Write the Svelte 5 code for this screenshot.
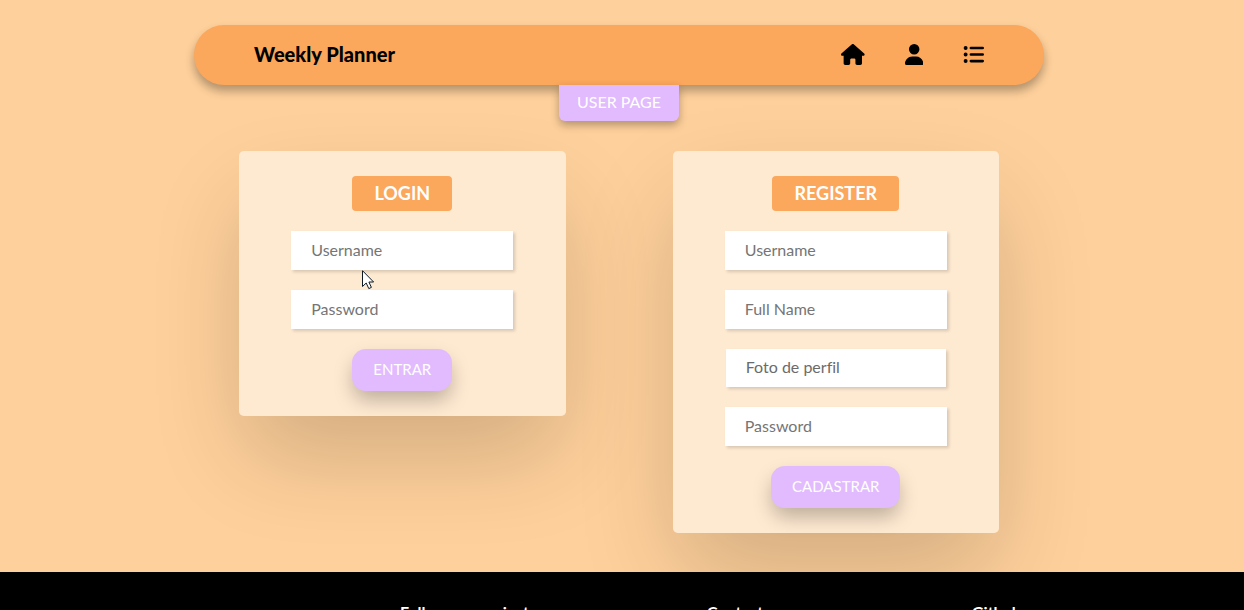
<script>
  const icons = [
    {
      name: 'Home',
      box: '0 0 576 512',
      path: 'M575.8 255.5c0 18-15 32.1-32 32.1h-32l.7 160.2c0 2.7-.2 5.4-.5 8.1V472c0 22.1-17.9 40-40 40H392c-22.1 0-40-17.9-40-40V384c0-17.7-14.3-32-32-32H256c-17.7 0-32 14.3-32 32v88c0 22.1-17.9 40-40 40H104c-22.1 0-40-17.9-40-40V287.6H32c-18 0-32-14-32-32.1c0-9 3-17 10-24L266.4 8c7-7 15-8 22-8s15 2 21 7L564.8 231.5c8 7 12 15 11 24z',
    },
    {
      name: 'User',
      box: '0 0 448 512',
      path: 'M224 256A128 128 0 1 0 224 0a128 128 0 1 0 0 256zm-45.7 48C79.8 304 0 383.8 0 482.3C0 498.7 13.3 512 29.7 512H418.3c16.4 0 29.7-13.3 29.7-29.7C448 383.8 368.2 304 269.7 304H178.3z',
    },
    {
      name: 'Tasks',
      box: '0 0 512 512',
      path: 'M64 144a48 48 0 1 0 0-96 48 48 0 1 0 0 96zM192 64a32 32 0 0 0 0 64H480a32 32 0 0 0 0-64H192zm0 160a32 32 0 0 0 0 64H480a32 32 0 0 0 0-64H192zm0 160a32 32 0 0 0 0 64H480a32 32 0 0 0 0-64H192zM64 304a48 48 0 1 0 0-96 48 48 0 1 0 0 96zm48 112a48 48 0 1 0-96 0 48 48 0 1 0 96 0z',
    },
  ];
</script>

<div class="page">
  <header>
    <div class="bar">
      <h1>Weekly Planner</h1>
      <nav>
        {#each icons as icon}
          <a href="#{icon.name.toLowerCase()}" aria-label={icon.name}>
            <svg viewBox={icon.box} aria-hidden="true"><path d={icon.path} /></svg>
          </a>
        {/each}
      </nav>
    </div>
    <p class="tab">USER PAGE</p>
  </header>

  <main>
    <form class="card">
      <h2>LOGIN</h2>
      <input class="field" type="text" placeholder="Username" aria-label="Username" />
      <input class="field" type="password" placeholder="Password" aria-label="Password" />
      <button type="button">ENTRAR</button>
      <svg class="pointer" viewBox="0 0 12 20" aria-hidden="true">
        <path d="M.5 .7V16.5L4.2 13L6.8 18.6L9.4 17.4L6.9 12H11.6Z" />
      </svg>
    </form>

    <form class="card">
      <h2>REGISTER</h2>
      <input class="field" type="text" placeholder="Username" aria-label="Username" />
      <input class="field" type="text" placeholder="Full Name" aria-label="Full Name" />
      <label class="field photo">Foto de perfil<input type="file" /></label>
      <input class="field" type="password" placeholder="Password" aria-label="Password" />
      <button type="button">CADASTRAR</button>
    </form>
  </main>

  <footer>
    <h3>Follow our project</h3>
    <h3>Contact</h3>
    <h3>Github</h3>
  </footer>
</div>

<style>
  :global(body) {
    margin: 0;
    background: #fed09b;
  }
  .page {
    box-sizing: border-box;
    height: 100vh;
    overflow: hidden;
    font-family: Lato, 'Open Sans', sans-serif;
    font-size: 16px;
    font-variant-ligatures: none;
    color: #000;
  }
  h1, h2, h3, p {
    margin: 0;
  }
  header {
    position: relative;
    z-index: 1;
    display: flex;
    flex-direction: column;
    align-items: center;
    padding: 25px 6px 0 0;
  }
  .bar {
    position: relative;
    z-index: 1;
    box-sizing: border-box;
    width: 100%;
    max-width: 850px;
    height: 60px;
    padding: 0 60px 2px;
    display: flex;
    align-items: center;
    justify-content: space-between;
    border-radius: 30px;
    background: #fba75c;
    box-shadow: 0 6px 10px rgba(0, 0, 0, 0.3);
  }
  h1 {
    font-size: 20px;
    font-weight: 900;
    line-height: 30px;
  }
  nav {
    display: flex;
    gap: 40px;
  }
  nav a {
    display: flex;
    color: inherit;
  }
  nav svg {
    height: 21px;
    fill: currentColor;
  }
  .tab {
    position: relative;
    z-index: 1;
    box-sizing: border-box;
    min-width: 120px;
    height: 36px;
    padding: 0 18px;
    border-radius: 0 0 6px 6px;
    background: #e1bbfe;
    color: #fff;
    text-align: center;
    font-size: 16px;
    line-height: 34px;
    box-shadow: 0 4px 9px rgba(0, 0, 0, 0.3);
  }
  main {
    box-sizing: border-box;
    max-width: 856px;
    margin: 0 auto;
    padding: 30px 51px 39px 45px;
    display: grid;
    grid-template-columns: 1fr 1fr;
    align-items: start;
    gap: 107px;
  }
  .card {
    position: relative;
    padding: 25px;
    display: flex;
    flex-direction: column;
    align-items: center;
    gap: 20px;
    border-radius: 5px;
    background: #fee9d1;
  }
  .card::before {
    content: '';
    position: absolute;
    inset: 0;
    z-index: -1;
    border-radius: 5px;
    box-shadow: 0 45px 95px -8px rgba(0, 0, 0, 0.18);
  }
  h2 {
    height: 35px;
    padding: 0 22px;
    border-radius: 4px;
    background: #fba75c;
    color: #fff;
    font-size: 18px;
    line-height: 34px;
  }
  .field {
    box-sizing: border-box;
    width: 222px;
    height: 39px;
    padding: 0 20px 3px;
    border: 0;
    border-radius: 0;
    background: #fff;
    color: #757575;
    font: inherit;
    font-variant-ligatures: none;
    box-shadow: 2px 2px 3px rgba(0, 0, 0, 0.15);
  }
  .field::placeholder {
    color: #757575;
    opacity: 1;
  }
  .photo {
    width: 220px;
    height: 38px;
    line-height: 36px;
    color: #6b6b6b;
  }
  .photo input {
    display: none;
  }
  button {
    height: 42px;
    padding: 0 21px 3px;
    border: 0;
    border-radius: 14px;
    background: #e1bbfe;
    color: #fff;
    font: inherit;
    font-size: 15px;
    box-shadow: 0 10px 20px -2px rgba(0, 0, 0, 0.27);
  }
  .pointer {
    position: absolute;
    left: 123px;
    top: 119px;
    width: 12px;
    height: 20px;
    fill: #fff;
    stroke: #0b1a26;
  }
  footer {
    position: relative;
    display: grid;
    grid-template-columns: 400fr 307fr 265fr 272fr;
    padding: 28px 0;
    background: #000;
    color: #fff;
  }
  h3 {
    font-size: 16px;
    line-height: 24px;
  }
  h3:first-child {
    grid-column: 2;
  }
</style>
